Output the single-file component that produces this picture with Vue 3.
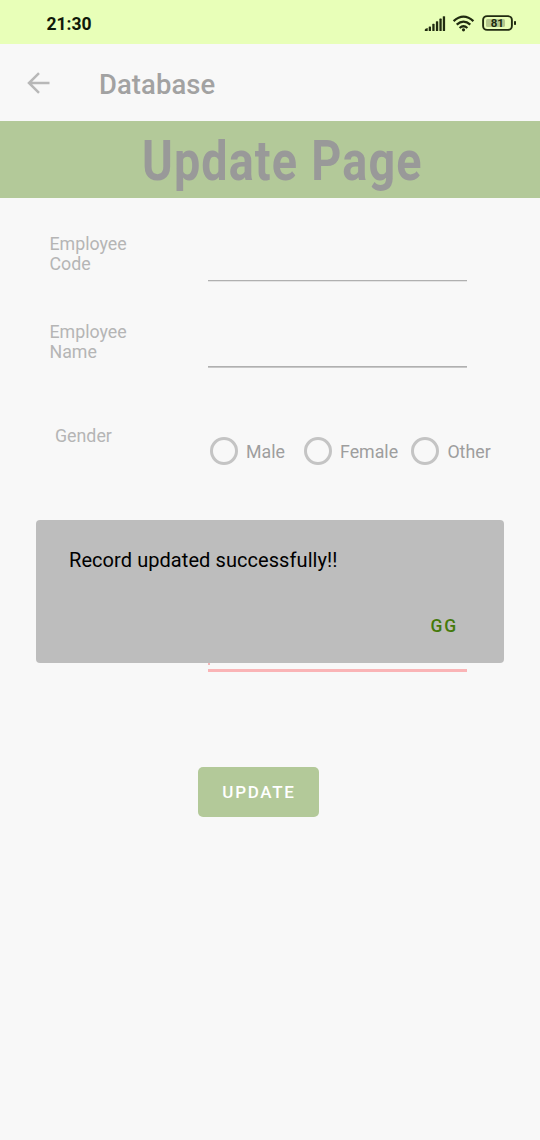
<script setup>
const genders = ['Male', 'Female', 'Other']
</script>

<template>
  <div class="screen">
    <header class="status">
      <span class="clock">21:30</span>
      <svg class="indicators" width="94" height="20" viewBox="0 0 94 20">
        <g fill="#202b10">
          <path d="M.8 18v-1.2q0-1 2.9-1.8v3z" />
          <rect x="4.7" y="13.4" width="2.3" height="4.6" rx=".6" />
          <rect x="8.3" y="10.8" width="2.3" height="7.2" rx=".6" />
          <rect x="11.9" y="8.2" width="2.3" height="9.8" rx=".6" />
          <rect x="15.4" y="5.6" width="2.3" height="12.4" rx=".6" />
          <rect x="18.8" y="3.2" width="2.3" height="14.8" rx=".6" />
        </g>
        <g fill="none" stroke="#202b10" stroke-width="2.3">
          <path d="M29.6 8.2Q39.5-.9 49.4 8.2" />
          <path d="M32.7 11.7Q39.5 5.5 46.3 11.7" />
          <path d="M35.6 15Q39.5 11.6 43.4 15" />
        </g>
        <circle cx="39.5" cy="16.8" r="1.6" fill="#202b10" />
        <rect x="59.1" y="3.1" width="28.8" height="13.8" rx="4" fill="none" stroke="#202b10" stroke-width="1.9" />
        <rect x="62" y="6" width="19" height="8" rx="1.5" fill="#b5c98e" />
        <rect x="90" y="8" width="2" height="4" rx=".8" fill="#202b10" />
        <text x="73.3" y="14.3" text-anchor="middle" class="charge">81</text>
      </svg>
    </header>

    <nav class="appbar">
      <svg class="back" width="24" height="24" viewBox="0 0 24 24">
        <path d="M22.5 12H2.2M12 2.2 2 12l10 9.8" fill="none" stroke="#b8b8b8" stroke-width="2.5" />
      </svg>
      <span class="title">Database</span>
    </nav>

    <div class="banner"><h1>Update Page</h1></div>

    <main>
      <div class="field code">
        <label>Employee<br>Code</label>
        <div class="line"></div>
      </div>
      <div class="field name">
        <label>Employee<br>Name</label>
        <div class="line"></div>
      </div>
      <div class="gender">
        <span class="caption">Gender</span>
        <div class="options">
          <div v-for="g in genders" :key="g" class="option" :class="g.toLowerCase()">
            <i></i><span>{{ g }}</span>
          </div>
        </div>
      </div>
      <div class="error-line"></div>
      <button class="update">UPDATE</button>
    </main>

    <section class="dialog">
      <p>Record updated successfully!!</p>
      <button class="confirm">GG</button>
      <span class="hint-edge"></span>
    </section>
  </div>
</template>

<style>
body { background: #f8f8f8; }
</style>

<style scoped>
.screen {
  position: relative;
  width: 540px;
  height: 1140px;
  overflow: hidden;
  background: #f8f8f8;
  font-family: Roboto, "Liberation Sans", sans-serif;
}
.status {
  height: 44px;
  box-sizing: border-box;
  padding: 4px 22px 0 46.4px;
  display: flex;
  align-items: center;
  justify-content: space-between;
  background: #e8ffb8;
}
.clock { font-size: 17.5px; font-weight: 700; color: #10190a; }
.indicators { margin-top: -3px; }
.charge { font: 700 11.5px Roboto, sans-serif; fill: #202b10; }
.appbar {
  height: 77px;
  display: flex;
  align-items: center;
  padding-left: 27px;
}
.title {
  margin: 4.5px 0 0 48px;
  font-size: 27.4px;
  font-weight: 500;
  letter-spacing: .1px;
  color: #a2a2a2;
}
.banner { height: 77px; background: #b3c999; display: flex; }
h1 {
  margin: 0 0 0 142px;
  font-size: 55px;
  line-height: 80px;
  font-weight: 700;
  letter-spacing: 1.3px;
  word-spacing: .5px;
  color: #999;
  white-space: nowrap;
  transform: scaleX(.85);
  transform-origin: left;
}
main { display: flex; flex-direction: column; }
.field { display: flex; align-items: flex-start; padding-left: 49.5px; }
.field label { width: 158px; padding-top: 1px; font-size: 17.8px; line-height: 20.4px; color: #b5b5b5; }
.code { margin-top: 35px; height: 88px; }
.name { height: 88px; }
.line { width: 259px; height: 1px; background: #b0b0b0; margin-top: 47px; border-bottom: 1px solid #e4e4e4; }
.name .line { margin-top: 45px; border-bottom-color: #c8c8c8; }
.gender { display: flex; height: 252px; padding-left: 55px; align-items: flex-start; }
.caption { width: 155px; margin-top: 16px; font-size: 17.8px; line-height: 21px; color: #b5b5b5; }
.options { display: flex; margin-top: 28px; }
.option { display: flex; align-items: center; height: 28px; font-size: 17.8px; color: #9e9e9e; }
.option i {
  box-sizing: border-box;
  width: 28px;
  height: 28px;
  border: 3px solid #c4c4c4;
  border-radius: 50%;
  margin-right: 8px;
}
.male { width: 94px; }
.female { width: 107.4px; }
.error-line { margin: 8px 0 0 207.5px; width: 259px; height: 2.5px; background: #fab4b6; }
button { border: 0; font-family: inherit; font-weight: 500; }
.update {
  width: 121px;
  height: 50px;
  margin: 95.5px 0 0 198px;
  padding: 0 0 0 1px;
  border-radius: 5px;
  background: #b3c999;
  color: #fff;
  font-size: 17px;
  font-weight: 500;
  letter-spacing: 1.7px;
}
.dialog {
  position: absolute;
  left: 36px;
  top: 520.4px;
  width: 468px;
  height: 143px;
  box-sizing: border-box;
  border-radius: 4px;
  background: #bdbdbd;
  padding: 28px 46px 0 33px;
  display: flex;
  flex-direction: column;
}
.dialog p { margin: 0; font-size: 20px; line-height: 24px; letter-spacing: .07px; color: #000; }
.confirm {
  align-self: flex-end;
  margin-top: 42.5px;
  padding: 0;
  background: none;
  color: #457a0b;
  font-size: 17.5px;
  line-height: 22px;
  letter-spacing: 1.8px;
}
.hint-edge {
  position: absolute;
  left: 172px;
  top: 143px;
  width: 2px;
  height: 2px;
  background: #f3b5b7;
}
</style>
